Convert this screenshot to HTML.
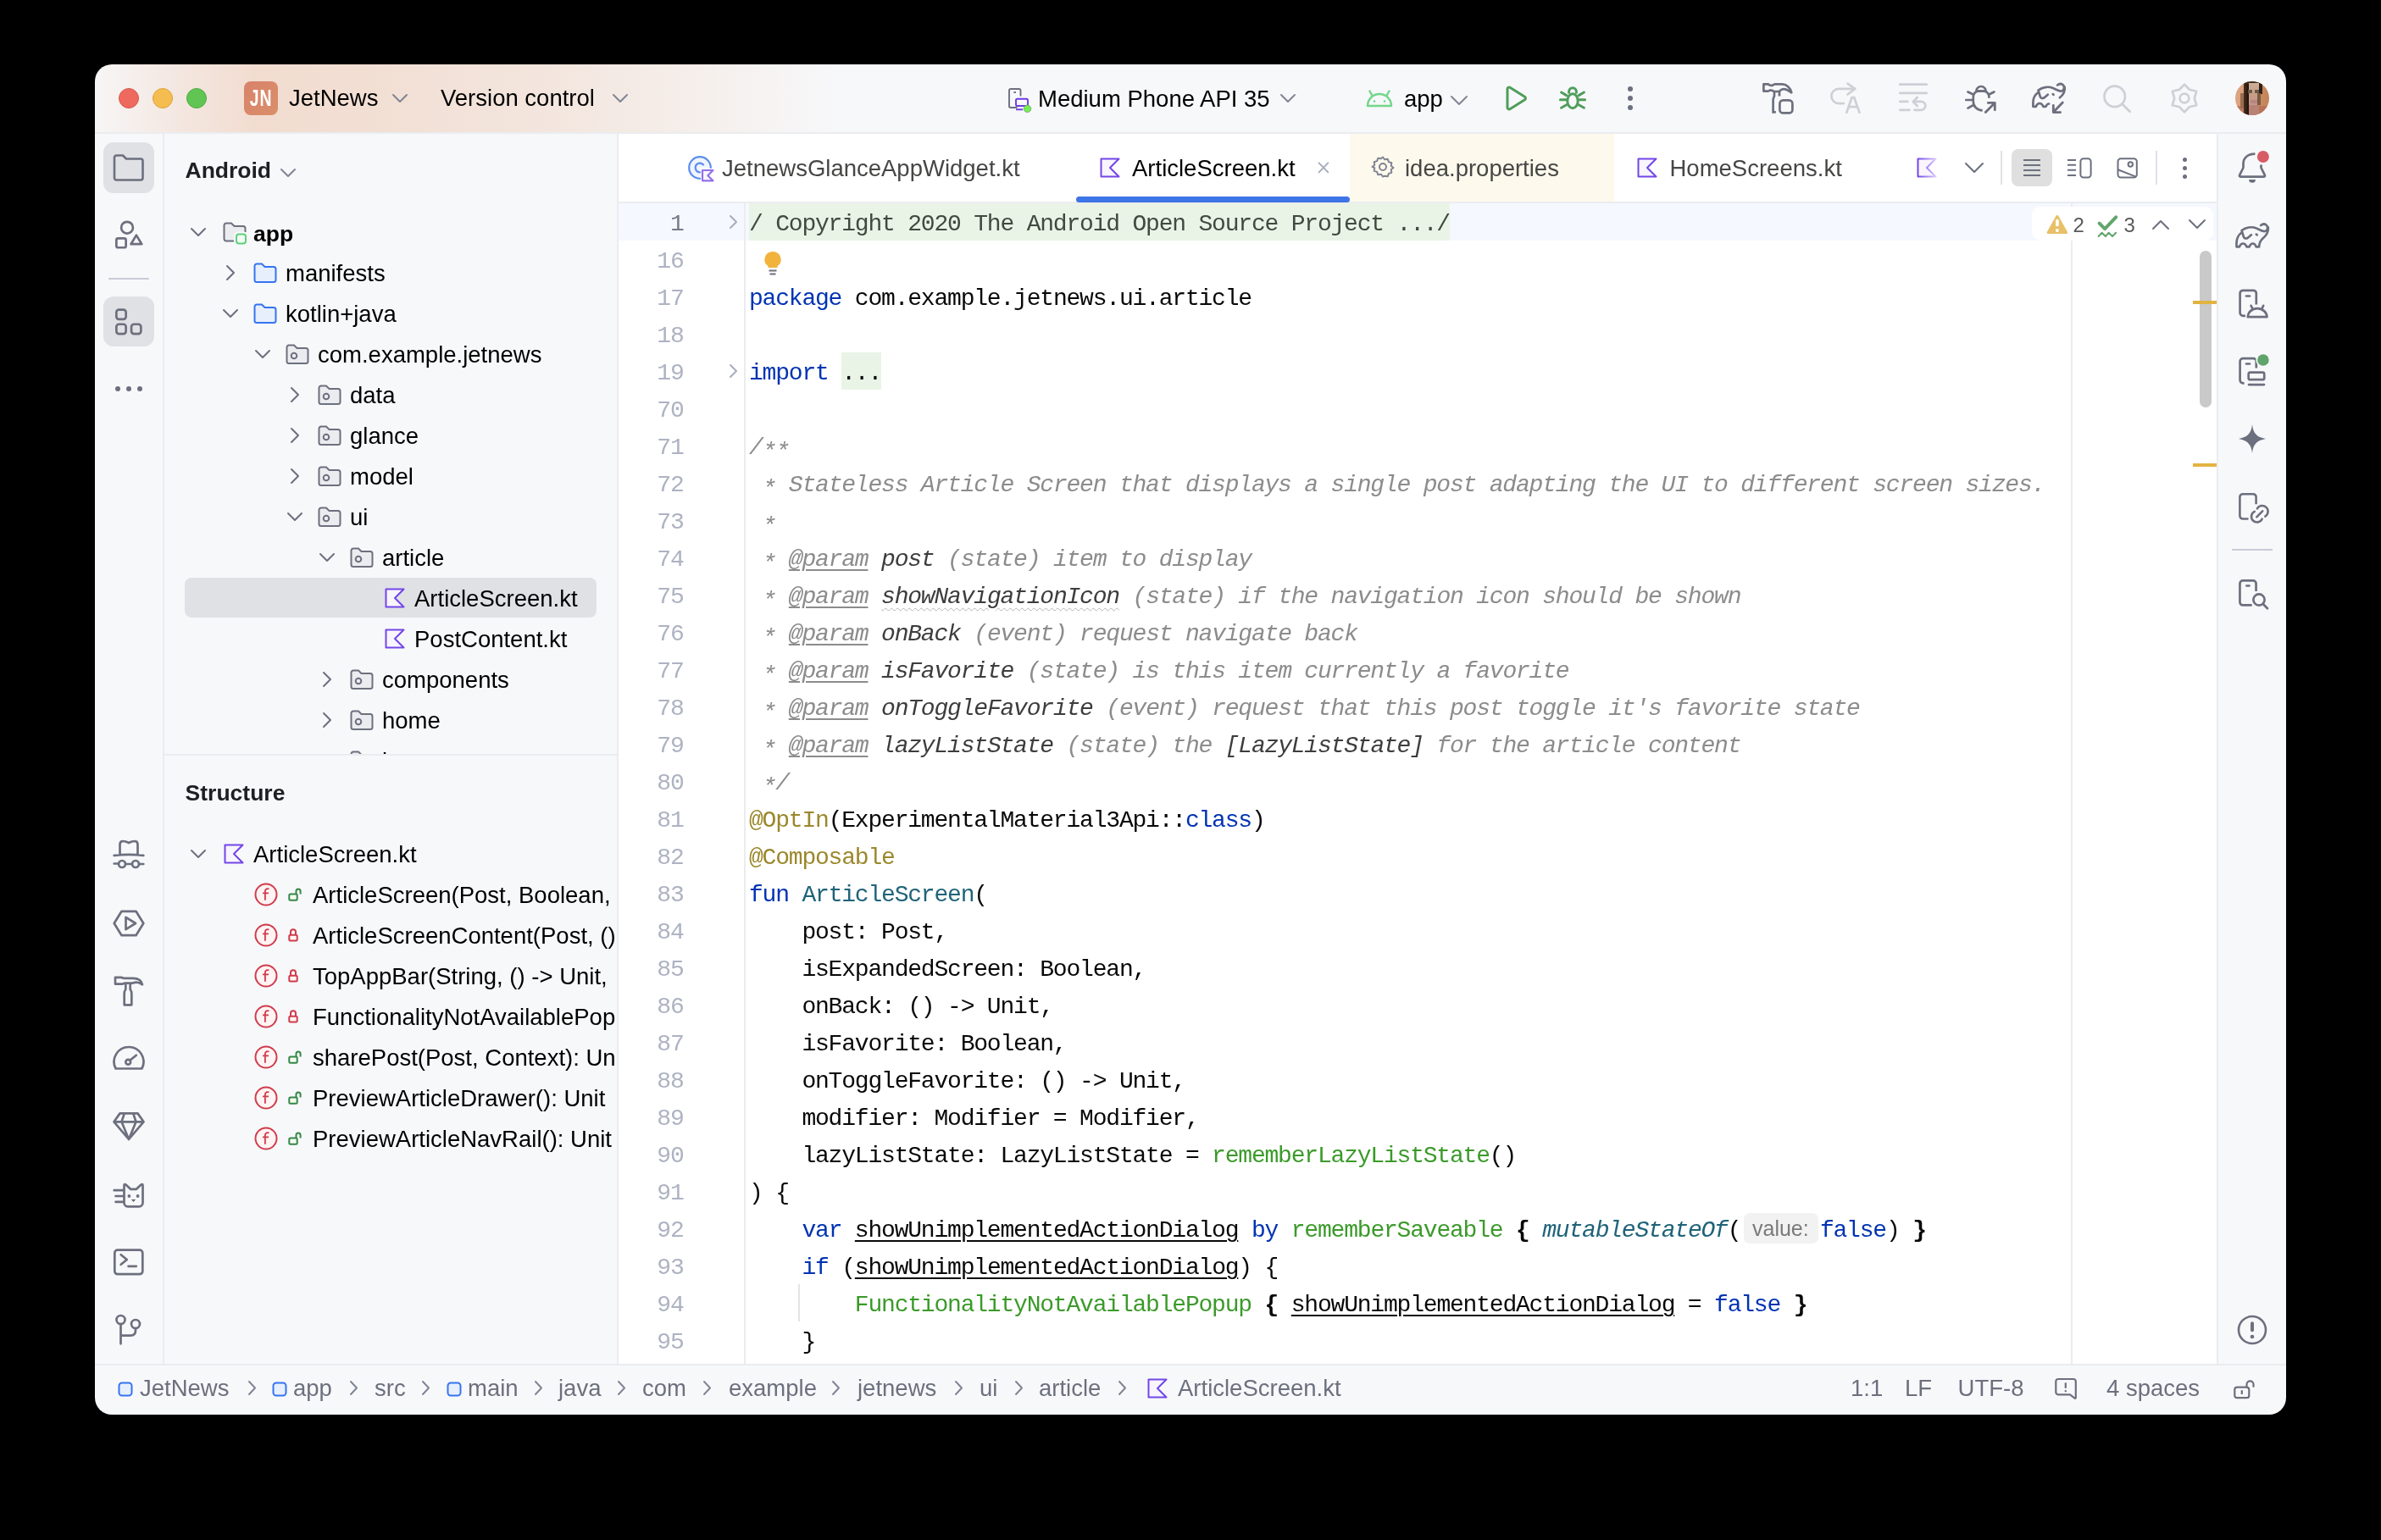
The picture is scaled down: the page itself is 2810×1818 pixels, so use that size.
<!DOCTYPE html><html><head><meta charset="utf-8"><style>
html,body{margin:0;padding:0}
body{width:2810px;height:1818px;background:#000;position:relative;overflow:hidden;font-family:"Liberation Sans",sans-serif}
#win{position:absolute;left:0;top:0;width:2810px;height:1818px;background:#f7f8fa;will-change:transform;clip-path:inset(76px 112px 148px 112px round 20px)}
.t{position:absolute;white-space:pre;line-height:32px}
.r{position:absolute}
.i{position:absolute;overflow:visible}
.code{position:absolute;left:884px;white-space:pre;font-family:"Liberation Mono",monospace;font-size:28px;letter-spacing:-1.2px;line-height:44px;color:#080808}
.ln{position:absolute;white-space:pre;font-family:"Liberation Mono",monospace;font-size:28px;letter-spacing:-1.2px;line-height:44px;color:#aeb3c2;text-align:right;width:120px;left:686.5px}
.kw{color:#0033b3}.an{color:#9b882c}.fd{color:#1f6379}.cp{color:#3b9a2a}.cm{color:#8c8c8c;font-style:italic}
.pn{color:#3d3d3d;font-style:italic}.ul{text-decoration:underline;text-decoration-thickness:2px;text-underline-offset:4px}
.it{font-style:italic}.b{font-weight:bold}
</style></head><body><div id="win">
<div class="r" style="left:112px;top:76px;width:2586px;height:80px;background:linear-gradient(90deg, #f7f6f6 0px, #f4e8e2 90px, #f2dcd0 190px, #f2dfd4 330px, #f3e5dd 520px, #f5eeea 700px, #f7f8fa 880px);"></div>
<div class="r" style="left:112px;top:156px;width:2586px;height:2px;background:#ebecf0;"></div>
<div class="r" style="left:140px;top:104px;width:22px;height:22px;border-radius:50%;background:#ee6a5f;border:1px solid #d8574c"></div>
<div class="r" style="left:180px;top:104px;width:22px;height:22px;border-radius:50%;background:#f5bd4f;border:1px solid #dba23a"></div>
<div class="r" style="left:220px;top:104px;width:22px;height:22px;border-radius:50%;background:#61c554;border:1px solid #4dab41"></div>
<div class="r" style="left:288px;top:96px;width:40px;height:40px;background:linear-gradient(135deg,#d9826a,#d98f6a);border-radius:8px"></div>
<div class="t" style="left:288px;top:100px;width:40px;text-align:center;font-size:27px;font-weight:bold;line-height:32px;color:#fff;transform:scaleX(0.72);letter-spacing:1px">JN</div>
<div class="t" style="left:341px;top:100.0px;font-size:27.5px;color:#000;font-weight:normal;">JetNews</div>
<svg class="i" style="left:462.0px;top:110.0px;" width="20" height="12" viewBox="0 0 20 12" fill="none"><path d="M2 2 L10.0 10 L18 2" stroke="#818594" stroke-width="2" stroke-linecap="round" stroke-linejoin="round"/></svg>
<div class="t" style="left:520px;top:100.0px;font-size:27.5px;color:#000;font-weight:normal;">Version control</div>
<svg class="i" style="left:722.0px;top:110.0px;" width="20" height="12" viewBox="0 0 20 12" fill="none"><path d="M2 2 L10.0 10 L18 2" stroke="#818594" stroke-width="2" stroke-linecap="round" stroke-linejoin="round"/></svg>
<div class="r" style="left:192px;top:158px;width:2px;height:1452px;background:#ebecf0;"></div>
<div class="r" style="left:728px;top:158px;width:2px;height:1452px;background:#ebecf0;"></div>
<div class="r" style="left:730px;top:158px;width:1886px;height:1452px;background:#ffffff;"></div>
<div class="r" style="left:730px;top:238px;width:1886px;height:2px;background:#ebecf0;"></div>
<div class="r" style="left:2616px;top:158px;width:2px;height:1452px;background:#ebecf0;"></div>
<div class="r" style="left:112px;top:1610px;width:2586px;height:2px;background:#ebecf0;"></div>
<div class="t" style="left:218.5px;top:185.0px;font-size:26.5px;color:#1e1f22;font-weight:bold;">Android</div>
<svg class="i" style="left:330.0px;top:198.0px;" width="20" height="12" viewBox="0 0 20 12" fill="none"><path d="M2 2 L10.0 10 L18 2" stroke="#818594" stroke-width="2" stroke-linecap="round" stroke-linejoin="round"/></svg>
<div class="r" style="left:218px;top:682px;width:486px;height:47px;background:#dfe1e5;border-radius:8px"></div>
<div class="r" style="left:194px;top:240px;width:534px;height:650px;overflow:hidden">
<svg class="i" style="left:30px;top:28px;" width="20" height="12" viewBox="0 0 20 12" fill="none"><path d="M2 2 L10 10 L18 2" stroke="#6c707e" stroke-width="2" stroke-linecap="round" stroke-linejoin="round"/></svg>
<svg class="i" style="left:68px;top:21px;" width="32" height="30" viewBox="0 0 32 30" fill="none"><path d="M15 23.5 h-10 a2.5 2.5 0 0 1 -2.5-2.5 v-16 a2.5 2.5 0 0 1 2.5-2.5 h6 l3.5 3.5 h10.5 a2.5 2.5 0 0 1 2.5 2.5 v4.5" fill="#ebecf0" stroke="#6c707e" stroke-width="2"/><rect x="14" y="12.5" width="16" height="16" rx="5" fill="#f7f8fa"/><rect x="17" y="15.5" width="11" height="11" rx="3" fill="#f2fbf4" stroke="#5fd07b" stroke-width="2"/></svg>
<div class="t" style="left:105px;top:19.5px;font-size:26.5px;color:#000;font-weight:bold;">app</div>
<svg class="i" style="left:72px;top:72px;" width="12" height="20" viewBox="0 0 12 20" fill="none"><path d="M2 2 L10 10 L2 18" stroke="#6c707e" stroke-width="2" stroke-linecap="round" stroke-linejoin="round"/></svg>
<svg class="i" style="left:104px;top:69px;" width="30" height="28" viewBox="0 0 30 28" fill="none"><path d="M2.5 5 a2.5 2.5 0 0 1 2.5-2.5 h6 l3.5 3.5 h10.5 a2.5 2.5 0 0 1 2.5 2.5 v13 a2.5 2.5 0 0 1 -2.5 2.5 h-20 a2.5 2.5 0 0 1 -2.5-2.5 z" fill="#e7effd" stroke="#3574f0" stroke-width="2"/></svg>
<div class="t" style="left:143px;top:66.5px;font-size:27.5px;color:#000;font-weight:normal;">manifests</div>
<svg class="i" style="left:68px;top:124px;" width="20" height="12" viewBox="0 0 20 12" fill="none"><path d="M2 2 L10 10 L18 2" stroke="#6c707e" stroke-width="2" stroke-linecap="round" stroke-linejoin="round"/></svg>
<svg class="i" style="left:104px;top:117px;" width="30" height="28" viewBox="0 0 30 28" fill="none"><path d="M2.5 5 a2.5 2.5 0 0 1 2.5-2.5 h6 l3.5 3.5 h10.5 a2.5 2.5 0 0 1 2.5 2.5 v13 a2.5 2.5 0 0 1 -2.5 2.5 h-20 a2.5 2.5 0 0 1 -2.5-2.5 z" fill="#e7effd" stroke="#3574f0" stroke-width="2"/></svg>
<div class="t" style="left:143px;top:114.5px;font-size:27.5px;color:#000;font-weight:normal;">kotlin+java</div>
<svg class="i" style="left:106px;top:172px;" width="20" height="12" viewBox="0 0 20 12" fill="none"><path d="M2 2 L10 10 L18 2" stroke="#6c707e" stroke-width="2" stroke-linecap="round" stroke-linejoin="round"/></svg>
<svg class="i" style="left:142px;top:165px;" width="30" height="28" viewBox="0 0 30 28" fill="none"><path d="M2.5 5 a2.5 2.5 0 0 1 2.5-2.5 h6 l3.5 3.5 h10.5 a2.5 2.5 0 0 1 2.5 2.5 v13 a2.5 2.5 0 0 1 -2.5 2.5 h-20 a2.5 2.5 0 0 1 -2.5-2.5 z" fill="#ebecf0" stroke="#6c707e" stroke-width="2"/><circle cx="11" cy="15" r="3.3" stroke="#6c707e" stroke-width="2"/></svg>
<div class="t" style="left:181px;top:162.5px;font-size:27.5px;color:#000;font-weight:normal;">com.example.jetnews</div>
<svg class="i" style="left:148px;top:216px;" width="12" height="20" viewBox="0 0 12 20" fill="none"><path d="M2 2 L10 10 L2 18" stroke="#6c707e" stroke-width="2" stroke-linecap="round" stroke-linejoin="round"/></svg>
<svg class="i" style="left:180px;top:213px;" width="30" height="28" viewBox="0 0 30 28" fill="none"><path d="M2.5 5 a2.5 2.5 0 0 1 2.5-2.5 h6 l3.5 3.5 h10.5 a2.5 2.5 0 0 1 2.5 2.5 v13 a2.5 2.5 0 0 1 -2.5 2.5 h-20 a2.5 2.5 0 0 1 -2.5-2.5 z" fill="#ebecf0" stroke="#6c707e" stroke-width="2"/><circle cx="11" cy="15" r="3.3" stroke="#6c707e" stroke-width="2"/></svg>
<div class="t" style="left:219px;top:210.5px;font-size:27.5px;color:#000;font-weight:normal;">data</div>
<svg class="i" style="left:148px;top:264px;" width="12" height="20" viewBox="0 0 12 20" fill="none"><path d="M2 2 L10 10 L2 18" stroke="#6c707e" stroke-width="2" stroke-linecap="round" stroke-linejoin="round"/></svg>
<svg class="i" style="left:180px;top:261px;" width="30" height="28" viewBox="0 0 30 28" fill="none"><path d="M2.5 5 a2.5 2.5 0 0 1 2.5-2.5 h6 l3.5 3.5 h10.5 a2.5 2.5 0 0 1 2.5 2.5 v13 a2.5 2.5 0 0 1 -2.5 2.5 h-20 a2.5 2.5 0 0 1 -2.5-2.5 z" fill="#ebecf0" stroke="#6c707e" stroke-width="2"/><circle cx="11" cy="15" r="3.3" stroke="#6c707e" stroke-width="2"/></svg>
<div class="t" style="left:219px;top:258.5px;font-size:27.5px;color:#000;font-weight:normal;">glance</div>
<svg class="i" style="left:148px;top:312px;" width="12" height="20" viewBox="0 0 12 20" fill="none"><path d="M2 2 L10 10 L2 18" stroke="#6c707e" stroke-width="2" stroke-linecap="round" stroke-linejoin="round"/></svg>
<svg class="i" style="left:180px;top:309px;" width="30" height="28" viewBox="0 0 30 28" fill="none"><path d="M2.5 5 a2.5 2.5 0 0 1 2.5-2.5 h6 l3.5 3.5 h10.5 a2.5 2.5 0 0 1 2.5 2.5 v13 a2.5 2.5 0 0 1 -2.5 2.5 h-20 a2.5 2.5 0 0 1 -2.5-2.5 z" fill="#ebecf0" stroke="#6c707e" stroke-width="2"/><circle cx="11" cy="15" r="3.3" stroke="#6c707e" stroke-width="2"/></svg>
<div class="t" style="left:219px;top:306.5px;font-size:27.5px;color:#000;font-weight:normal;">model</div>
<svg class="i" style="left:144px;top:364px;" width="20" height="12" viewBox="0 0 20 12" fill="none"><path d="M2 2 L10 10 L18 2" stroke="#6c707e" stroke-width="2" stroke-linecap="round" stroke-linejoin="round"/></svg>
<svg class="i" style="left:180px;top:357px;" width="30" height="28" viewBox="0 0 30 28" fill="none"><path d="M2.5 5 a2.5 2.5 0 0 1 2.5-2.5 h6 l3.5 3.5 h10.5 a2.5 2.5 0 0 1 2.5 2.5 v13 a2.5 2.5 0 0 1 -2.5 2.5 h-20 a2.5 2.5 0 0 1 -2.5-2.5 z" fill="#ebecf0" stroke="#6c707e" stroke-width="2"/><circle cx="11" cy="15" r="3.3" stroke="#6c707e" stroke-width="2"/></svg>
<div class="t" style="left:219px;top:354.5px;font-size:27.5px;color:#000;font-weight:normal;">ui</div>
<svg class="i" style="left:182px;top:412px;" width="20" height="12" viewBox="0 0 20 12" fill="none"><path d="M2 2 L10 10 L18 2" stroke="#6c707e" stroke-width="2" stroke-linecap="round" stroke-linejoin="round"/></svg>
<svg class="i" style="left:218px;top:405px;" width="30" height="28" viewBox="0 0 30 28" fill="none"><path d="M2.5 5 a2.5 2.5 0 0 1 2.5-2.5 h6 l3.5 3.5 h10.5 a2.5 2.5 0 0 1 2.5 2.5 v13 a2.5 2.5 0 0 1 -2.5 2.5 h-20 a2.5 2.5 0 0 1 -2.5-2.5 z" fill="#ebecf0" stroke="#6c707e" stroke-width="2"/><circle cx="11" cy="15" r="3.3" stroke="#6c707e" stroke-width="2"/></svg>
<div class="t" style="left:257px;top:402.5px;font-size:27.5px;color:#000;font-weight:normal;">article</div>
<svg class="i" style="left:260px;top:454px;" width="24" height="24" viewBox="0 0 24 24" fill="none"><path d="M1.5 1.5 H22.5 L12 12 L22.5 22.5 H1.5 Z" fill="#f8f5ff" stroke="#7346e8" stroke-width="2" stroke-linejoin="round"/></svg>
<div class="t" style="left:295px;top:450.5px;font-size:27.5px;color:#000;font-weight:normal;">ArticleScreen.kt</div>
<svg class="i" style="left:260px;top:502px;" width="24" height="24" viewBox="0 0 24 24" fill="none"><path d="M1.5 1.5 H22.5 L12 12 L22.5 22.5 H1.5 Z" fill="#f8f5ff" stroke="#7346e8" stroke-width="2" stroke-linejoin="round"/></svg>
<div class="t" style="left:295px;top:498.5px;font-size:27.5px;color:#000;font-weight:normal;">PostContent.kt</div>
<svg class="i" style="left:186px;top:552px;" width="12" height="20" viewBox="0 0 12 20" fill="none"><path d="M2 2 L10 10 L2 18" stroke="#6c707e" stroke-width="2" stroke-linecap="round" stroke-linejoin="round"/></svg>
<svg class="i" style="left:218px;top:549px;" width="30" height="28" viewBox="0 0 30 28" fill="none"><path d="M2.5 5 a2.5 2.5 0 0 1 2.5-2.5 h6 l3.5 3.5 h10.5 a2.5 2.5 0 0 1 2.5 2.5 v13 a2.5 2.5 0 0 1 -2.5 2.5 h-20 a2.5 2.5 0 0 1 -2.5-2.5 z" fill="#ebecf0" stroke="#6c707e" stroke-width="2"/><circle cx="11" cy="15" r="3.3" stroke="#6c707e" stroke-width="2"/></svg>
<div class="t" style="left:257px;top:546.5px;font-size:27.5px;color:#000;font-weight:normal;">components</div>
<svg class="i" style="left:186px;top:600px;" width="12" height="20" viewBox="0 0 12 20" fill="none"><path d="M2 2 L10 10 L2 18" stroke="#6c707e" stroke-width="2" stroke-linecap="round" stroke-linejoin="round"/></svg>
<svg class="i" style="left:218px;top:597px;" width="30" height="28" viewBox="0 0 30 28" fill="none"><path d="M2.5 5 a2.5 2.5 0 0 1 2.5-2.5 h6 l3.5 3.5 h10.5 a2.5 2.5 0 0 1 2.5 2.5 v13 a2.5 2.5 0 0 1 -2.5 2.5 h-20 a2.5 2.5 0 0 1 -2.5-2.5 z" fill="#ebecf0" stroke="#6c707e" stroke-width="2"/><circle cx="11" cy="15" r="3.3" stroke="#6c707e" stroke-width="2"/></svg>
<div class="t" style="left:257px;top:594.5px;font-size:27.5px;color:#000;font-weight:normal;">home</div>
<svg class="i" style="left:218px;top:645px;" width="30" height="28" viewBox="0 0 30 28" fill="none"><path d="M2.5 5 a2.5 2.5 0 0 1 2.5-2.5 h6 l3.5 3.5 h10.5 a2.5 2.5 0 0 1 2.5 2.5 v13 a2.5 2.5 0 0 1 -2.5 2.5 h-20 a2.5 2.5 0 0 1 -2.5-2.5 z" fill="#ebecf0" stroke="#6c707e" stroke-width="2"/><circle cx="11" cy="15" r="3.3" stroke="#6c707e" stroke-width="2"/></svg>
<div class="t" style="left:257px;top:642.5px;font-size:27.5px;color:#000;font-weight:normal;">interests</div>
</div>
<div class="r" style="left:194px;top:890px;width:534px;height:2px;background:#ebecf0;"></div>
<div class="t" style="left:218.6px;top:919.5px;font-size:26.5px;color:#1e1f22;font-weight:bold;">Structure</div>
<svg class="i" style="left:224px;top:1002px;" width="20" height="12" viewBox="0 0 20 12" fill="none"><path d="M2 2 L10 10 L18 2" stroke="#6c707e" stroke-width="2" stroke-linecap="round" stroke-linejoin="round"/></svg>
<svg class="i" style="left:264px;top:996px;" width="24" height="24" viewBox="0 0 24 24" fill="none"><path d="M1.5 1.5 H22.5 L12 12 L22.5 22.5 H1.5 Z" fill="#f8f5ff" stroke="#7346e8" stroke-width="2" stroke-linejoin="round"/></svg>
<div class="t" style="left:299px;top:992.5px;font-size:27.5px;color:#000;font-weight:normal;">ArticleScreen.kt</div>
<div class="r" style="left:194px;top:1030px;width:534px;height:400px;overflow:hidden">
<svg class="i" style="left:105px;top:11px;" width="30" height="30" viewBox="0 0 30 30" fill="none"><circle cx="15" cy="15" r="12.5" fill="#fff3f3" stroke="#d03b4b" stroke-width="2"/><path d="M18.5 8.6 a3 3 0 0 0 -4.6 2.2 V21.8 M11 13.4 H18" stroke="#d03b4b" stroke-width="1.8"/></svg>
<svg class="i" style="left:143px;top:15px;" width="22" height="22" viewBox="0 0 22 22" fill="none"><rect x="4.3" y="10.4" width="9.4" height="7.4" rx="1.5" fill="#f2fbf2" stroke="#368746" stroke-width="2"/><path d="M12.5 10.4 V7 A2.55 2.55 0 0 1 17.6 7 V10.6" stroke="#368746" stroke-width="2"/></svg>
<div class="t" style="left:175px;top:10.5px;font-size:27.5px;color:#000;font-weight:normal;">ArticleScreen(Post, Boolean, () -&gt; Unit, Boolean, () -&gt; Unit</div>
<svg class="i" style="left:105px;top:59px;" width="30" height="30" viewBox="0 0 30 30" fill="none"><circle cx="15" cy="15" r="12.5" fill="#fff3f3" stroke="#d03b4b" stroke-width="2"/><path d="M18.5 8.6 a3 3 0 0 0 -4.6 2.2 V21.8 M11 13.4 H18" stroke="#d03b4b" stroke-width="1.8"/></svg>
<svg class="i" style="left:143px;top:63px;" width="22" height="22" viewBox="0 0 22 22" fill="none"><rect x="4.3" y="10.7" width="9.4" height="6.8" rx="1.5" fill="#fff5f5" stroke="#d03b4b" stroke-width="2"/><path d="M6 10.7 V7.2 A3 3 0 0 1 12 7.2 V10.7" stroke="#d03b4b" stroke-width="2"/></svg>
<div class="t" style="left:175px;top:58.5px;font-size:27.5px;color:#000;font-weight:normal;">ArticleScreenContent(Post, () -&gt; Unit</div>
<svg class="i" style="left:105px;top:107px;" width="30" height="30" viewBox="0 0 30 30" fill="none"><circle cx="15" cy="15" r="12.5" fill="#fff3f3" stroke="#d03b4b" stroke-width="2"/><path d="M18.5 8.6 a3 3 0 0 0 -4.6 2.2 V21.8 M11 13.4 H18" stroke="#d03b4b" stroke-width="1.8"/></svg>
<svg class="i" style="left:143px;top:111px;" width="22" height="22" viewBox="0 0 22 22" fill="none"><rect x="4.3" y="10.7" width="9.4" height="6.8" rx="1.5" fill="#fff5f5" stroke="#d03b4b" stroke-width="2"/><path d="M6 10.7 V7.2 A3 3 0 0 1 12 7.2 V10.7" stroke="#d03b4b" stroke-width="2"/></svg>
<div class="t" style="left:175px;top:106.5px;font-size:27.5px;color:#000;font-weight:normal;">TopAppBar(String, () -&gt; Unit,</div>
<svg class="i" style="left:105px;top:155px;" width="30" height="30" viewBox="0 0 30 30" fill="none"><circle cx="15" cy="15" r="12.5" fill="#fff3f3" stroke="#d03b4b" stroke-width="2"/><path d="M18.5 8.6 a3 3 0 0 0 -4.6 2.2 V21.8 M11 13.4 H18" stroke="#d03b4b" stroke-width="1.8"/></svg>
<svg class="i" style="left:143px;top:159px;" width="22" height="22" viewBox="0 0 22 22" fill="none"><rect x="4.3" y="10.7" width="9.4" height="6.8" rx="1.5" fill="#fff5f5" stroke="#d03b4b" stroke-width="2"/><path d="M6 10.7 V7.2 A3 3 0 0 1 12 7.2 V10.7" stroke="#d03b4b" stroke-width="2"/></svg>
<div class="t" style="left:175px;top:154.5px;font-size:27.5px;color:#000;font-weight:normal;">FunctionalityNotAvailablePopup(() -&gt; Unit)</div>
<svg class="i" style="left:105px;top:203px;" width="30" height="30" viewBox="0 0 30 30" fill="none"><circle cx="15" cy="15" r="12.5" fill="#fff3f3" stroke="#d03b4b" stroke-width="2"/><path d="M18.5 8.6 a3 3 0 0 0 -4.6 2.2 V21.8 M11 13.4 H18" stroke="#d03b4b" stroke-width="1.8"/></svg>
<svg class="i" style="left:143px;top:207px;" width="22" height="22" viewBox="0 0 22 22" fill="none"><rect x="4.3" y="10.4" width="9.4" height="7.4" rx="1.5" fill="#f2fbf2" stroke="#368746" stroke-width="2"/><path d="M12.5 10.4 V7 A2.55 2.55 0 0 1 17.6 7 V10.6" stroke="#368746" stroke-width="2"/></svg>
<div class="t" style="left:175px;top:202.5px;font-size:27.5px;color:#000;font-weight:normal;">sharePost(Post, Context): Unit</div>
<svg class="i" style="left:105px;top:251px;" width="30" height="30" viewBox="0 0 30 30" fill="none"><circle cx="15" cy="15" r="12.5" fill="#fff3f3" stroke="#d03b4b" stroke-width="2"/><path d="M18.5 8.6 a3 3 0 0 0 -4.6 2.2 V21.8 M11 13.4 H18" stroke="#d03b4b" stroke-width="1.8"/></svg>
<svg class="i" style="left:143px;top:255px;" width="22" height="22" viewBox="0 0 22 22" fill="none"><rect x="4.3" y="10.4" width="9.4" height="7.4" rx="1.5" fill="#f2fbf2" stroke="#368746" stroke-width="2"/><path d="M12.5 10.4 V7 A2.55 2.55 0 0 1 17.6 7 V10.6" stroke="#368746" stroke-width="2"/></svg>
<div class="t" style="left:175px;top:250.5px;font-size:27.5px;color:#000;font-weight:normal;">PreviewArticleDrawer(): Unit</div>
<svg class="i" style="left:105px;top:299px;" width="30" height="30" viewBox="0 0 30 30" fill="none"><circle cx="15" cy="15" r="12.5" fill="#fff3f3" stroke="#d03b4b" stroke-width="2"/><path d="M18.5 8.6 a3 3 0 0 0 -4.6 2.2 V21.8 M11 13.4 H18" stroke="#d03b4b" stroke-width="1.8"/></svg>
<svg class="i" style="left:143px;top:303px;" width="22" height="22" viewBox="0 0 22 22" fill="none"><rect x="4.3" y="10.4" width="9.4" height="7.4" rx="1.5" fill="#f2fbf2" stroke="#368746" stroke-width="2"/><path d="M12.5 10.4 V7 A2.55 2.55 0 0 1 17.6 7 V10.6" stroke="#368746" stroke-width="2"/></svg>
<div class="t" style="left:175px;top:298.5px;font-size:27.5px;color:#000;font-weight:normal;">PreviewArticleNavRail(): Unit</div>
</div>
<svg class="i" style="left:811px;top:181px;" width="34" height="34" viewBox="0 0 34 34" fill="none"><path d="M15 17 L15 29.8 A12.8 12.8 0 1 1 27.8 17 Z" fill="#f0f4fd"/><path d="M15 29.8 A12.8 12.8 0 1 1 27.8 17 M15 22.4 A5.4 5.4 0 1 1 19.1 13.5" stroke="#5b8def" stroke-width="2.2" stroke-linecap="round"/><path d="M18 20 H30.5 L24.3 26.2 L30.5 32.3 H18 Z" fill="#faf8ff" stroke="#9370e8" stroke-width="2.2" stroke-linejoin="round"/></svg>
<div class="t" style="left:852px;top:182.5px;font-size:27.5px;color:#464645;font-weight:normal;">JetnewsGlanceAppWidget.kt</div>
<svg class="i" style="left:1298px;top:186px;" width="24" height="24" viewBox="0 0 24 24" fill="none"><path d="M1.5 1.5 H22.5 L12 12 L22.5 22.5 H1.5 Z" fill="#f8f5ff" stroke="#7346e8" stroke-width="2" stroke-linejoin="round"/></svg>
<div class="t" style="left:1336px;top:182.5px;font-size:27.5px;color:#000;font-weight:normal;">ArticleScreen.kt</div>
<svg class="i" style="left:1552px;top:186px;" width="20" height="20" viewBox="0 0 20 20" fill="none"><path d="M4.6 6.4 L15.3 17.4 M15.3 6.4 L4.6 17.4" stroke="#a8adbd" stroke-width="2" stroke-linecap="round"/></svg>
<div class="r" style="left:1270px;top:232px;width:323px;height:7px;background:#3d74e6;border-radius:4px"></div>
<div class="r" style="left:1593px;top:158px;width:312px;height:80px;background:#fdf9ec;"></div>
<svg class="i" style="left:1618px;top:183px;" width="28" height="28" viewBox="0 0 28 28" fill="none"><path d="M14 2.5 l2.2 2.8 3.5-.6 1.2 3.4 3.4 1.2-.6 3.5 2.8 2.2-2.8 2.2.6 3.5-3.4 1.2-1.2 3.4-3.5-.6L14 25.5l-2.2-2.8-3.5.6-1.2-3.4-3.4-1.2.6-3.5L1.5 14l2.8-2.2-.6-3.5 3.4-1.2 1.2-3.4 3.5.6z" stroke="#818594" stroke-width="2" stroke-linejoin="round"/><circle cx="14" cy="14" r="4" stroke="#818594" stroke-width="2"/></svg>
<div class="t" style="left:1658px;top:182.5px;font-size:27.5px;color:#464645;font-weight:normal;">idea.properties</div>
<svg class="i" style="left:1932px;top:186px;" width="24" height="24" viewBox="0 0 24 24" fill="none"><path d="M1.5 1.5 H22.5 L12 12 L22.5 22.5 H1.5 Z" fill="#f8f5ff" stroke="#7346e8" stroke-width="2" stroke-linejoin="round"/></svg>
<div class="t" style="left:1970.5px;top:182.5px;font-size:27.5px;color:#464645;font-weight:normal;">HomeScreens.kt</div>
<svg class="i" style="left:2262px;top:186px;" width="24" height="24" viewBox="0 0 24 24" fill="none"><defs><linearGradient id="kf" x1="0" x2="1"><stop offset="0" stop-color="#7346e8"/><stop offset="1" stop-color="#7346e8" stop-opacity="0.25"/></linearGradient></defs><path d="M1.5 1.5 H22.5 L12 12 L22.5 22.5 H1.5 Z" fill="#f8f5ff" stroke="url(#kf)" stroke-width="2" stroke-linejoin="round"/></svg>
<svg class="i" style="left:2318px;top:190px;" width="24" height="16" viewBox="0 0 24 16" fill="none"><path d="M2 3 L12 13 L22 3" stroke="#6c707e" stroke-width="2" stroke-linecap="round" stroke-linejoin="round"/></svg>
<div class="r" style="left:2361px;top:178px;width:2px;height:40px;background:#dfe1e5;"></div>
<div class="r" style="left:2374px;top:176px;width:48px;height:44px;background:#dfdfdf;border-radius:8px"></div>
<svg class="i" style="left:2386px;top:186px;" width="24" height="24" viewBox="0 0 24 24" fill="none"><path d="M2 3 H22 M2 9 H22 M2 15 H22 M2 21 H22" stroke="#6c707e" stroke-width="2"/></svg>
<svg class="i" style="left:2438px;top:184px;" width="32" height="28" viewBox="0 0 32 28" fill="none"><path d="M2 4.9 H12 M2 10.8 H12 M2 16.7 H12 M2 22.9 H12" stroke="#6c707e" stroke-width="2"/><rect x="17.4" y="3.3" width="12.2" height="22.2" rx="3.5" stroke="#6c707e" stroke-width="2"/></svg>
<svg class="i" style="left:2496px;top:184px;" width="28" height="28" viewBox="0 0 28 28" fill="none"><rect x="3.5" y="3.3" width="22.3" height="22.2" rx="3.5" stroke="#6c707e" stroke-width="2"/><path d="M3.5 16.2 L24.8 24.6" stroke="#6c707e" stroke-width="2"/><circle cx="18.3" cy="10" r="2.7" stroke="#6c707e" stroke-width="2"/></svg>
<div class="r" style="left:2544px;top:178px;width:2px;height:40px;background:#dfe1e5;"></div>
<div class="r" style="left:2575.5px;top:185.5px;width:5px;height:5px;border-radius:50%;background:#6c707e"></div>
<div class="r" style="left:2575.5px;top:195.5px;width:5px;height:5px;border-radius:50%;background:#6c707e"></div>
<div class="r" style="left:2575.5px;top:205.5px;width:5px;height:5px;border-radius:50%;background:#6c707e"></div>
<div class="r" style="left:730px;top:240px;width:1886px;height:44px;background:#f5f8fe;"></div>
<div class="r" style="left:878px;top:240px;width:2px;height:1370px;background:#ebecf0;"></div>
<div class="r" style="left:2444px;top:240px;width:2px;height:1370px;background:#ebecf0;"></div>
<div class="ln" style="top:243px;color:#767a8a">1</div>
<div class="ln" style="top:287px;color:#aeb3c2">16</div>
<div class="ln" style="top:331px;color:#aeb3c2">17</div>
<div class="ln" style="top:375px;color:#aeb3c2">18</div>
<div class="ln" style="top:419px;color:#aeb3c2">19</div>
<div class="ln" style="top:463px;color:#aeb3c2">70</div>
<div class="ln" style="top:507px;color:#aeb3c2">71</div>
<div class="ln" style="top:551px;color:#aeb3c2">72</div>
<div class="ln" style="top:595px;color:#aeb3c2">73</div>
<div class="ln" style="top:639px;color:#aeb3c2">74</div>
<div class="ln" style="top:683px;color:#aeb3c2">75</div>
<div class="ln" style="top:727px;color:#aeb3c2">76</div>
<div class="ln" style="top:771px;color:#aeb3c2">77</div>
<div class="ln" style="top:815px;color:#aeb3c2">78</div>
<div class="ln" style="top:859px;color:#aeb3c2">79</div>
<div class="ln" style="top:903px;color:#aeb3c2">80</div>
<div class="ln" style="top:947px;color:#aeb3c2">81</div>
<div class="ln" style="top:991px;color:#aeb3c2">82</div>
<div class="ln" style="top:1035px;color:#aeb3c2">83</div>
<div class="ln" style="top:1079px;color:#aeb3c2">84</div>
<div class="ln" style="top:1123px;color:#aeb3c2">85</div>
<div class="ln" style="top:1167px;color:#aeb3c2">86</div>
<div class="ln" style="top:1211px;color:#aeb3c2">87</div>
<div class="ln" style="top:1255px;color:#aeb3c2">88</div>
<div class="ln" style="top:1299px;color:#aeb3c2">89</div>
<div class="ln" style="top:1343px;color:#aeb3c2">90</div>
<div class="ln" style="top:1387px;color:#aeb3c2">91</div>
<div class="ln" style="top:1431px;color:#aeb3c2">92</div>
<div class="ln" style="top:1475px;color:#aeb3c2">93</div>
<div class="ln" style="top:1519px;color:#aeb3c2">94</div>
<div class="ln" style="top:1563px;color:#aeb3c2">95</div>
<svg class="i" style="left:859px;top:252px;" width="14" height="20" viewBox="0 0 14 20" fill="none"><path d="M3 3 L10 10 L3 17" stroke="#a8adbd" stroke-width="2" stroke-linecap="round" stroke-linejoin="round"/></svg>
<svg class="i" style="left:859px;top:428px;" width="14" height="20" viewBox="0 0 14 20" fill="none"><path d="M3 3 L10 10 L3 17" stroke="#a8adbd" stroke-width="2" stroke-linecap="round" stroke-linejoin="round"/></svg>
<div class="r" style="left:884px;top:240px;width:827px;height:44px;background:#e9f4e6;"></div>
<div class="r" style="left:993px;top:416px;width:47px;height:44px;background:#e9f4e6;"></div>
<svg class="i" style="left:900px;top:295px;" width="24" height="32" viewBox="0 0 24 32" fill="none"><path d="M12 2 a9.5 9.5 0 0 1 5.5 17.3 V21 H6.5 V19.3 A9.5 9.5 0 0 1 12 2 z" fill="#f2b33d"/><path d="M7.5 24.5 H16.5 M8.5 28.5 H15.5" stroke="#6c707e" stroke-width="2"/></svg>
<div class="r" style="left:942px;top:1516px;width:2px;height:44px;background:#e4e4e4;"></div>
<div class="code" style="top:243px"><span style="color:#3f4a41">/ Copyright 2020 The Android Open Source Project .../</span></div>
<div class="code" style="top:331px"><span class="kw">package</span> com.example.jetnews.ui.article</div>
<div class="code" style="top:419px"><span class="kw">import</span> ...</div>
<div class="code" style="top:507px"><span class="cm">/<span style="position:relative;top:5px">*</span><span style="position:relative;top:5px">*</span></span></div>
<div class="code" style="top:551px"><span class="cm"> <span style="position:relative;top:5px">*</span></span><span class="cm"> Stateless Article Screen that displays a single post adapting the UI to different screen sizes.</span></div>
<div class="code" style="top:595px"><span class="cm"> <span style="position:relative;top:5px">*</span></span></div>
<div class="code" style="top:639px"><span class="cm"> <span style="position:relative;top:5px">*</span> </span><span class="cm ul" style="text-decoration-thickness:1.5px">@param</span><span class="cm"> </span><span class="pn">post</span><span class="cm"> (state) item to display</span></div>
<div class="code" style="top:683px"><span class="cm"> <span style="position:relative;top:5px">*</span> </span><span class="cm ul" style="text-decoration-thickness:1.5px">@param</span><span class="cm"> </span><span class="pn" style="text-decoration:underline wavy #b4b4b4;text-decoration-thickness:1px;text-underline-offset:5px">showNavigationIcon</span><span class="cm"> (state) if the navigation icon should be shown</span></div>
<div class="code" style="top:727px"><span class="cm"> <span style="position:relative;top:5px">*</span> </span><span class="cm ul" style="text-decoration-thickness:1.5px">@param</span><span class="cm"> </span><span class="pn">onBack</span><span class="cm"> (event) request navigate back</span></div>
<div class="code" style="top:771px"><span class="cm"> <span style="position:relative;top:5px">*</span> </span><span class="cm ul" style="text-decoration-thickness:1.5px">@param</span><span class="cm"> </span><span class="pn">isFavorite</span><span class="cm"> (state) is this item currently a favorite</span></div>
<div class="code" style="top:815px"><span class="cm"> <span style="position:relative;top:5px">*</span> </span><span class="cm ul" style="text-decoration-thickness:1.5px">@param</span><span class="cm"> </span><span class="pn">onToggleFavorite</span><span class="cm"> (event) request that this post toggle it&#x27;s favorite state</span></div>
<div class="code" style="top:859px"><span class="cm"> <span style="position:relative;top:5px">*</span> </span><span class="cm ul" style="text-decoration-thickness:1.5px">@param</span><span class="cm"> </span><span class="pn">lazyListState</span><span class="cm"> (state) the </span><span class="pn">[LazyListState]</span><span class="cm"> for the article content</span></div>
<div class="code" style="top:903px"><span class="cm"> <span style="position:relative;top:5px">*</span>/</span></div>
<div class="code" style="top:947px"><span class="an">@OptIn</span>(ExperimentalMaterial3Api::<span class="kw">class</span>)</div>
<div class="code" style="top:991px"><span class="an">@Composable</span></div>
<div class="code" style="top:1035px"><span class="kw">fun</span> <span class="fd">ArticleScreen</span>(</div>
<div class="code" style="top:1079px">    post: Post,</div>
<div class="code" style="top:1123px">    isExpandedScreen: Boolean,</div>
<div class="code" style="top:1167px">    onBack: () -&gt; Unit,</div>
<div class="code" style="top:1211px">    isFavorite: Boolean,</div>
<div class="code" style="top:1255px">    onToggleFavorite: () -&gt; Unit,</div>
<div class="code" style="top:1299px">    modifier: Modifier = Modifier,</div>
<div class="code" style="top:1343px">    lazyListState: LazyListState = <span class="cp">rememberLazyListState</span>()</div>
<div class="code" style="top:1387px">) {</div>
<div class="code" style="top:1431px">    <span class="kw">var</span> <span class="ul">showUnimplementedActionDialog</span> <span class="kw">by</span> <span class="cp">rememberSaveable</span> <span class="b">{</span> <span class="fd it">mutableStateOf</span>(<span style="display:inline-block;width:93.6px"></span><span class="kw">false</span>) <span class="b">}</span></div>
<div class="code" style="top:1475px">    <span class="kw">if</span> (<span class="ul">showUnimplementedActionDialog</span>) {</div>
<div class="code" style="top:1519px">        <span class="cp">FunctionalityNotAvailablePopup</span> <span class="b">{</span> <span class="ul">showUnimplementedActionDialog</span> = <span class="kw">false</span> <span class="b">}</span></div>
<div class="code" style="top:1563px">    }</div>
<div class="r" style="left:2058px;top:1432px;width:88px;height:36px;background:#f2f2f2;border-radius:7px"></div>
<div class="t" style="left:2068px;top:1434.3px;font-size:25px;color:#7a7a7a;font-weight:normal;">value:</div>
<div class="r" style="left:2398px;top:244px;width:214px;height:40px;background:#ffffff;border-radius:10px"></div>
<svg class="i" style="left:2414px;top:252px;" width="28" height="26" viewBox="0 0 28 26" fill="none"><path d="M13.9 3.6 L24.5 22.5 H3.3 Z" fill="#e8c067" stroke="#e8c067" stroke-width="3.2" stroke-linejoin="round"/><path d="M13.9 8.6 V13.4" stroke="#fff" stroke-width="3.8" stroke-linecap="round"/><circle cx="13.9" cy="19.9" r="2" fill="#fff"/></svg>
<div class="t" style="left:2446.5px;top:249.9px;font-size:24px;color:#5a5a5a;font-weight:normal;">2</div>
<svg class="i" style="left:2474px;top:252px;" width="26" height="30" viewBox="0 0 26 30" fill="none"><path d="M3.6 11.6 L10.1 18.2 L23.2 4.3" stroke="#62a66b" stroke-width="4" stroke-linecap="round" stroke-linejoin="round"/><path d="M2.6 27 L6.6 22.7 L10.9 27 L14.7 22.7 L19 27 L23.2 22.7" stroke="#62a66b" stroke-width="2" stroke-linecap="round" stroke-linejoin="round"/></svg>
<div class="t" style="left:2506.5px;top:249.9px;font-size:24px;color:#5a5a5a;font-weight:normal;">3</div>
<svg class="i" style="left:2539px;top:258px;" width="22" height="14" viewBox="0 0 22 14" fill="none"><path d="M2 12 L11 3 L20 12" stroke="#6c707e" stroke-width="2" stroke-linecap="round" stroke-linejoin="round"/></svg>
<svg class="i" style="left:2582px;top:258px;" width="22" height="14" viewBox="0 0 22 14" fill="none"><path d="M2 2 L11 11 L20 2" stroke="#6c707e" stroke-width="2" stroke-linecap="round" stroke-linejoin="round"/></svg>
<div class="r" style="left:2596px;top:296px;width:14px;height:185px;background:#c9c9c9;border-radius:7px"></div>
<div class="r" style="left:2588px;top:355px;width:28px;height:4px;background:#e3b341;"></div>
<div class="r" style="left:2588px;top:547px;width:28px;height:4px;background:#e3b341;"></div>
<svg class="i" style="left:1188px;top:102px;" width="32" height="32" viewBox="0 0 32 32" fill="none"><path d="M12.5 25 H4.7 a1.7 1.7 0 0 1 -1.7-1.7 V4.7 A1.7 1.7 0 0 1 4.7 3 H14.8 A1.7 1.7 0 0 1 16.5 4.7 V11.5" stroke="#6c707e" stroke-width="1.9"/><path d="M8.3 7 H11" stroke="#6c707e" stroke-width="1.9"/><rect x="11" y="14.8" width="14" height="8.2" rx="1.6" stroke="#6f3be6" stroke-width="1.9"/><path d="M11 27.3 H19" stroke="#6f3be6" stroke-width="1.9"/><circle cx="24.5" cy="26.3" r="4.3" fill="#72f04e" stroke="#7a8a7a" stroke-width="0.7"/></svg>
<div class="t" style="left:1225px;top:100.8px;font-size:27.5px;color:#000;font-weight:normal;">Medium Phone API 35</div>
<svg class="i" style="left:1510.0px;top:110.0px;" width="20" height="12" viewBox="0 0 20 12" fill="none"><path d="M2 2 L10.0 10 L18 2" stroke="#818594" stroke-width="2" stroke-linecap="round" stroke-linejoin="round"/></svg>
<svg class="i" style="left:1611px;top:104px;" width="34" height="24" viewBox="0 0 34 24" fill="none"><path d="M3 21 A14 14 0 0 1 31 21 Z" stroke="#72d68a" stroke-width="2.4" stroke-linejoin="round"/><path d="M8.5 9 L5.5 3.5 M25.5 9 L28.5 3.5" stroke="#72d68a" stroke-width="2.4" stroke-linecap="round"/><circle cx="11" cy="15.5" r="1.3" fill="#72d68a"/><circle cx="23" cy="15.5" r="1.3" fill="#72d68a"/></svg>
<div class="t" style="left:1657px;top:100.8px;font-size:27.5px;color:#000;font-weight:normal;">app</div>
<svg class="i" style="left:1711.0px;top:111.5px;" width="22" height="13" viewBox="0 0 22 13" fill="none"><path d="M2 2 L11.0 11 L20 2" stroke="#818594" stroke-width="2" stroke-linecap="round" stroke-linejoin="round"/></svg>
<svg class="i" style="left:1774px;top:100px;" width="30" height="32" viewBox="0 0 30 32" fill="none"><path d="M5 5 a2 2 0 0 1 3-1.7 L25.5 14.3 a2 2 0 0 1 0 3.4 L8 28.7 a2 2 0 0 1 -3-1.7 Z" stroke="#4f9d5a" stroke-width="3" stroke-linejoin="round"/></svg>
<svg class="i" style="left:1838px;top:99px;" width="36" height="34" viewBox="0 0 36 34" fill="none"><path d="M13.6 11.5 V9.2 A4.4 4.4 0 0 1 22.4 9.2 V11.5" stroke="#4f9d5a" stroke-width="3"/><ellipse cx="18" cy="20.2" rx="6.2" ry="8.5" stroke="#4f9d5a" stroke-width="3"/><path d="M4.6 10 L10.8 13.6 M3.4 18.7 H10.8 M4.6 28.2 L10.8 24.8 M31.4 10 L25.2 13.6 M32.6 18.7 H25.2 M31.4 28.2 L25.2 24.8" stroke="#4f9d5a" stroke-width="3" stroke-linecap="round"/></svg>
<div class="r" style="left:1921px;top:102px;width:6px;height:6px;border-radius:50%;background:#6c707e"></div>
<div class="r" style="left:1921px;top:113px;width:6px;height:6px;border-radius:50%;background:#6c707e"></div>
<div class="r" style="left:1921px;top:124px;width:6px;height:6px;border-radius:50%;background:#6c707e"></div>
<svg class="i" style="left:2076px;top:94px;" width="44" height="44" viewBox="0 0 44 44" fill="none"><path d="M5.4 5.4 H11 Q12.5 6.8 14 6.8 H16 Q17.5 5.4 19 5.4 H27 C32.5 5.4 37 9.5 38.3 15.3 C35 13 32 11.2 29 11.2 C27 11.2 25.5 12.3 23.5 14 H17.5 Q16 12.6 14.5 12.6 H12.5 Q11.5 13.6 10.5 13.6 H5.4 Z" stroke="#6c707e" stroke-width="2.7" stroke-linejoin="round"/><path d="M18 14 V19.5 Q16.6 21.5 16.6 24 V38.4 H19.8 M24 14 V19.5" stroke="#6c707e" stroke-width="2.7"/><rect x="24.4" y="24.4" width="15" height="15" rx="4" stroke="#6c707e" stroke-width="2.7"/></svg>
<svg class="i" style="left:2156px;top:94px;" width="44" height="44" viewBox="0 0 44 44" fill="none"><path d="M19.9 28.1 H14 A8.6 8.6 0 0 1 14 10.9 H33 M24.5 4.6 L33.3 10.9 L24.5 17.5" stroke="#ced0d6" stroke-width="2.7" stroke-linecap="round" stroke-linejoin="round"/><path d="M23 39.8 L29.5 21.2 H32.3 L38.8 39.8 M25.6 32.2 H36.2" stroke="#ced0d6" stroke-width="2.7"/></svg>
<svg class="i" style="left:2236px;top:94px;" width="44" height="44" viewBox="0 0 44 44" fill="none"><path d="M6.3 5.7 H37.7 M6.3 15.8 H37.7 M6.3 25.9 H15.3 M6.3 35.8 H17.5 M23.5 35.8 H32 A5 5 0 0 0 32 25.9 H22 M26.7 20.9 L21.8 25.9 L26.7 30.9" stroke="#ced0d6" stroke-width="2.8" stroke-linecap="round" stroke-linejoin="round"/></svg>
<svg class="i" style="left:2316px;top:94px;" width="44" height="44" viewBox="0 0 44 44" fill="none"><path d="M16.4 13.6 A5.6 5.6 0 0 1 27.6 13.6 Z" stroke="#6c707e" stroke-width="2.7" stroke-linejoin="round"/><path d="M31.4 21.8 V20 C31.4 16.5 28.5 13.6 25 13.6 H19.2 C15.7 13.6 12.8 16.5 12.8 20 V26 C12.8 31.8 17.5 36.3 23.7 36.3" stroke="#6c707e" stroke-width="2.7"/><path d="M6.5 14.5 L12.2 17.2 M4.3 24 H12 M6.5 33.6 L12.2 30.5 M37.4 14.5 L31.4 17.5" stroke="#6c707e" stroke-width="2.7" stroke-linecap="round"/><path d="M27.3 38.6 L38.2 27.6 M30.3 27.4 H38.3 V35.8" stroke="#6c707e" stroke-width="2.8" stroke-linecap="round" stroke-linejoin="round"/></svg>
<svg class="i" style="left:2392px;top:94px;" width="56" height="56" viewBox="0 0 56 56" fill="none"><g transform="translate(-2.1,-9.5)"><path d="M15.6 22 C20 19 27 17 33 19.5 C37 21 40 23.5 43 23 C46.5 22.5 47 17.5 44.5 15.5 C42.5 14 40 14.5 38.2 16 M15.6 22 L17.9 29.6 C18.5 31.5 20.5 32 22.5 31 L26.9 27.3 M32.8 26.6 L33.6 27.3 M9.5 41.3 V37 C9.5 31 12 27 15.6 24.5 M46.7 18 C47.5 23 45 27.5 41 30.8 M9.5 41.3 H12.9 C14 38.5 15.5 37.5 17.1 37.5 C18.7 37.5 20.5 38.5 21.5 41.3 H24.6 C25.7 38.8 26.8 38 28.2 38" stroke="#6c707e" stroke-width="2.7" stroke-linecap="round" stroke-linejoin="round"/></g><path d="M42.3 27 L31.5 38.3 M31.3 30.4 V38.6 H39.6" stroke="#6c707e" stroke-width="2.8" stroke-linecap="round" stroke-linejoin="round"/></svg>
<svg class="i" style="left:2476px;top:94px;" width="44" height="44" viewBox="0 0 44 44" fill="none"><circle cx="19.7" cy="19.9" r="12.2" stroke="#ced0d6" stroke-width="2.7"/><path d="M28.6 28.8 L37.6 37.8" stroke="#ced0d6" stroke-width="2.8" stroke-linecap="round"/></svg>
<svg class="i" style="left:2555.8px;top:93.8px;" width="44" height="44" viewBox="0 0 44 44" fill="none"><path d="M22.00 5.60 L27.90 11.78 L36.20 13.80 L33.80 22.00 L36.20 30.20 L27.90 32.22 L22.00 38.40 L16.10 32.22 L7.80 30.20 L10.20 22.00 L7.80 13.80 L16.10 11.78 Z" stroke="#ced0d6" stroke-width="2.7" stroke-linejoin="round"/><circle cx="22" cy="22" r="5.4" stroke="#ced0d6" stroke-width="2.7"/></svg>
<div class="r" style="left:2638px;top:96px;width:40px;height:40px;border-radius:50%;overflow:hidden;filter:blur(0.6px)"><div class="r" style="left:0px;top:0px;width:40px;height:40px;background:linear-gradient(90deg,#dca582 0%,#d89c76 40%,#c98a5c 75%,#c2845a 100%)"></div><div class="r" style="left:0px;top:29px;width:14px;height:11px;background:#c07a60"></div><div class="r" style="left:28px;top:29px;width:12px;height:11px;background:#b9735a"></div><div class="r" style="left:6px;top:14px;width:5px;height:18px;background:#9a6e4e"></div><div class="r" style="left:10px;top:0px;width:6px;height:40px;background:linear-gradient(90deg,#4a3020,#1e120c)"></div><div class="r" style="left:14px;top:0px;width:16px;height:3px;background:#3a2a20"></div><div class="r" style="left:16px;top:2px;width:14px;height:26px;background:linear-gradient(180deg,#cfae98 0%,#c9a48c 35%,#c89c84 60%,#c4988a 100%)"></div><div class="r" style="left:15px;top:10px;width:5px;height:4px;background:#6e5846"></div><div class="r" style="left:23px;top:10px;width:5px;height:4px;background:#6e5846"></div><div class="r" style="left:18px;top:22px;width:8px;height:4px;background:#b98580"></div><div class="r" style="left:16px;top:28px;width:12px;height:12px;background:#b88274"></div><div class="r" style="left:28px;top:2px;width:4px;height:13px;background:#2e2018"></div><div class="r" style="left:26px;top:14px;width:4px;height:14px;background:#7a5a42"></div></div>
<div class="r" style="left:122px;top:168px;width:60px;height:60px;background:#dfe1e5;border-radius:12px"></div>
<svg class="i" style="left:132px;top:178px;" width="40" height="40" viewBox="0 0 40 40" fill="none"><path d="M3 8 a2.5 2.5 0 0 1 2.5-2.5 H13 L17 9.5 H34 a2.5 2.5 0 0 1 2.5 2.5 V32 a2.5 2.5 0 0 1 -2.5 2.5 H5.5 A2.5 2.5 0 0 1 3 32 Z" stroke="#6c707e" stroke-width="2.6" stroke-linejoin="round"/></svg>
<svg class="i" style="left:132px;top:257px;" width="40" height="40" viewBox="0 0 40 40" fill="none"><circle cx="18" cy="11.7" r="6.9" stroke="#6c707e" stroke-width="2.7"/><rect x="5.35" y="24.45" width="11.3" height="10.8" rx="2" stroke="#6c707e" stroke-width="2.7"/><path d="M28.9 20.6 L35.3 31.2 H22.5 Z" stroke="#6c707e" stroke-width="2.7" stroke-linejoin="round"/></svg>
<div class="r" style="left:128px;top:328px;width:48px;height:2px;background:#c9ccd6;"></div>
<div class="r" style="left:122px;top:350px;width:60px;height:59px;background:#dfe1e5;border-radius:12px"></div>
<svg class="i" style="left:132px;top:360px;" width="40" height="40" viewBox="0 0 40 40" fill="none"><rect x="5.35" y="5.55" width="11.3" height="11.3" rx="3" stroke="#6c707e" stroke-width="2.7"/><rect x="5.35" y="22.75" width="11.3" height="11.3" rx="3" stroke="#6c707e" stroke-width="2.7"/><rect x="23.05" y="22.75" width="11.3" height="11.3" rx="3" stroke="#6c707e" stroke-width="2.7"/></svg>
<div class="r" style="left:136px;top:456px;width:6px;height:6px;border-radius:50%;background:#6c707e"></div>
<div class="r" style="left:149px;top:456px;width:6px;height:6px;border-radius:50%;background:#6c707e"></div>
<div class="r" style="left:162px;top:456px;width:6px;height:6px;border-radius:50%;background:#6c707e"></div>
<svg class="i" style="left:132px;top:987px;" width="40" height="40" viewBox="0 0 40 40" fill="none"><path d="M9.5 22 V10 Q9.5 6 13 6 Q16.5 6 20 8 Q23.5 6 27 6 Q30.5 6 30.5 10 V22 M2.7 22.8 Q20 20.8 37.3 22.8" stroke="#6c707e" stroke-width="2.7" stroke-linecap="round" stroke-linejoin="round"/><circle cx="12" cy="33" r="4" stroke="#6c707e" stroke-width="2.7"/><circle cx="28" cy="33" r="4" stroke="#6c707e" stroke-width="2.7"/><path d="M2.7 32.5 H8 M16 33 H24 M32 33 H37.3" stroke="#6c707e" stroke-width="2.7" stroke-linecap="round"/></svg>
<svg class="i" style="left:132px;top:1070px;" width="40" height="40" viewBox="0 0 40 40" fill="none"><path d="M11.5 5.8 H28.5 L37.3 20 L28.5 34.2 H11.5 L2.7 20 Z" stroke="#6c707e" stroke-width="2.7" stroke-linejoin="round"/><path d="M16.5 12.8 L28 20 L16.5 27.2 Z" stroke="#6c707e" stroke-width="2.7" stroke-linejoin="round"/></svg>
<svg class="i" style="left:132px;top:1150px;" width="40" height="40" viewBox="0 0 40 40" fill="none"><path d="M4 3.8 H11.5 Q13 4.8 15 4.8 H25 C31 4.8 35 7.5 36 12.3 C33 10.3 30 9.3 27.3 9.8 Q25.5 10.6 23.5 10.6 H16.5 Q14.5 10.6 12.5 11.6 H4 Z" stroke="#6c707e" stroke-width="2.7" stroke-linejoin="round"/><path d="M16.3 11 V18 Q14.7 20 14.7 22.5 V36.3 H23.3 V22.5 Q23.3 20 21.7 18 V11" stroke="#6c707e" stroke-width="2.7" stroke-linejoin="round"/></svg>
<svg class="i" style="left:132px;top:1230px;" width="40" height="40" viewBox="0 0 40 40" fill="none"><path d="M4.6 31.5 A17.4 17.4 0 1 1 35.4 31.5 Z" stroke="#6c707e" stroke-width="2.7" stroke-linejoin="round"/><circle cx="19.2" cy="23.7" r="2.9" stroke="#6c707e" stroke-width="2.7"/><path d="M21.5 21.6 L28.8 15.8" stroke="#6c707e" stroke-width="2.7" stroke-linecap="round"/></svg>
<svg class="i" style="left:132px;top:1309px;" width="40" height="40" viewBox="0 0 40 40" fill="none"><path d="M9.5 5.4 H30.5 L37.5 15.3 L20 36 L2.5 15.3 Z M2.5 15.3 H37.5 M14.8 5.4 L11.5 15.3 L20 36 L28.5 15.3 L25.2 5.4" stroke="#6c707e" stroke-width="2.7" stroke-linejoin="round"/></svg>
<svg class="i" style="left:132px;top:1389px;" width="40" height="40" viewBox="0 0 40 40" fill="none"><path d="M14.5 31 V10.5 Q14.5 8 16.8 9.8 L22 14.8 H29 L34.2 9.8 Q36.5 8 36.5 10.5 V31 a4.3 4.3 0 0 1 -4.3 4.3 H18.8 a4.3 4.3 0 0 1 -4.3-4.3 Z" stroke="#6c707e" stroke-width="2.7" stroke-linejoin="round"/><path d="M2.7 16.2 H13.5 M4.5 23 H13.5 M4.5 29.8 H13.5" stroke="#6c707e" stroke-width="2.7" stroke-linecap="round"/><circle cx="20.4" cy="23" r="1.9" fill="#6c707e"/><circle cx="30.6" cy="23" r="1.9" fill="#6c707e"/><path d="M23.5 27.3 H27.5 L25.5 29.5 Z" fill="#6c707e" stroke="#6c707e" stroke-width="1" stroke-linejoin="round"/></svg>
<svg class="i" style="left:132px;top:1470px;" width="40" height="40" viewBox="0 0 40 40" fill="none"><rect x="3.3" y="5.7" width="33" height="28.5" rx="3.5" stroke="#6c707e" stroke-width="2.7"/><path d="M10.7 11.3 L17.8 17 L10.7 22.8 M19.5 24.8 H28.8" stroke="#6c707e" stroke-width="2.7" stroke-linecap="round" stroke-linejoin="round"/></svg>
<svg class="i" style="left:132px;top:1549px;" width="40" height="40" viewBox="0 0 40 40" fill="none"><circle cx="10.5" cy="9" r="5" stroke="#6c707e" stroke-width="2.7"/><circle cx="28" cy="14" r="5" stroke="#6c707e" stroke-width="2.7"/><path d="M10.5 14 V37.3 M28 19 V21.5 Q28 27.6 22 27.6 H10.5" stroke="#6c707e" stroke-width="2.7" stroke-linecap="round"/></svg>
<svg class="i" style="left:2638px;top:176px;" width="40" height="40" viewBox="0 0 40 40" fill="none"><path d="M23.4 5.7 C14.5 5.7 9.5 10.5 9.5 17 V22 L5.3 30.4 Q4.3 32.6 6.7 32.6 H33.3 Q35.7 32.6 34.7 30.4 L30.5 22 V18.6" stroke="#6c707e" stroke-width="2.7" stroke-linejoin="round"/><path d="M16.2 36 H23.9 A3.85 3.85 0 0 1 16.2 36 Z" fill="#6c707e"/><circle cx="32.9" cy="9" r="7" fill="#d85c66"/></svg>
<svg class="i" style="left:2630px;top:250px;" width="56" height="56" viewBox="0 0 56 56" fill="none"><path d="M15.6 22 C20 19 27 17 33 19.5 C37 21 40 23.5 43 23 C46.5 22.5 47 17.5 44.5 15.5 C42.5 14 40 14.5 38.2 16 M15.6 22 L17.9 29.6 C18.5 31.5 20.5 32 22.5 31 L26.9 27.3 M32.8 26.6 L33.6 27.3 M9.5 41.3 V37 C9.5 31 12 27 15.6 24.5 M46.7 18 C47.5 23 45 27.5 41 31 C38 33.5 36.2 36 36.2 41.3 M9.5 41.3 H12.9 C14 38.5 15.5 37.5 17.1 37.5 C18.7 37.5 20.5 38.5 21.5 41.3 H24.6 C25.7 38.5 27 37.5 28.6 37.5 C30.2 37.5 31.8 38.5 32.7 41.3 H36.2" stroke="#6c707e" stroke-width="2.7" stroke-linecap="round" stroke-linejoin="round"/></svg>
<svg class="i" style="left:2638px;top:339px;" width="40" height="40" viewBox="0 0 40 40" fill="none"><path d="M12 33.8 H9.1 a3.5 3.5 0 0 1 -3.5-3.5 V7.3 a3.5 3.5 0 0 1 3.5-3.5 H21.3 a3.5 3.5 0 0 1 3.5 3.5 V20.5" stroke="#6c707e" stroke-width="2.7"/><path d="M13 10.5 H17" stroke="#6c707e" stroke-width="2.7" stroke-linecap="round"/><path d="M14.7 35.2 A11.35 10 0 0 1 37.4 35.2 Z" stroke="#6c707e" stroke-width="2.7" stroke-linejoin="round"/><path d="M18.6 21.8 L20.2 24.8 M33.2 21.8 L31.8 24.8" stroke="#6c707e" stroke-width="2.7" stroke-linecap="round"/></svg>
<svg class="i" style="left:2638px;top:417px;" width="40" height="40" viewBox="0 0 40 40" fill="none"><path d="M10.6 35.3 H9.1 a3.5 3.5 0 0 1 -3.5-3.5 V9.6 a3.5 3.5 0 0 1 3.5-3.5 H21.3 a3.5 3.5 0 0 1 3.5 3.5 V17.5" stroke="#6c707e" stroke-width="2.7"/><path d="M13 12.5 H17" stroke="#6c707e" stroke-width="2.7" stroke-linecap="round"/><rect x="15.65" y="22.55" width="18.6" height="8.6" rx="2" stroke="#6c707e" stroke-width="2.7"/><path d="M16 37.1 H34" stroke="#6c707e" stroke-width="2.7" stroke-linecap="round"/><circle cx="32.9" cy="8" r="8.6" fill="#f7f8fa"/><circle cx="32.9" cy="8" r="6.8" fill="#5fa46b"/></svg>
<svg class="i" style="left:2638px;top:498px;" width="40" height="40" viewBox="0 0 40 40" fill="none"><path d="M20 3 C21 13 25 18 36 20 C25 22 21 27 20 37 C19 27 15 22 4 20 C15 18 19 13 20 3 Z" fill="#6c707e"/></svg>
<svg class="i" style="left:2638px;top:580px;" width="40" height="40" viewBox="0 0 40 40" fill="none"><path d="M15.5 32.5 H8.9 a3.5 3.5 0 0 1 -3.5-3.5 V6.7 a3.5 3.5 0 0 1 3.5-3.5 H21.1 a3.5 3.5 0 0 1 3.5 3.5 V15.3" stroke="#6c707e" stroke-width="2.6"/><path d="M22.8 23.9 A6.6 6.6 0 1 0 31.6 32.7 M25.9 20.4 A6.8 6.8 0 1 1 35.3 29.6 M25.3 30.3 L32.2 23.3" stroke="#6c707e" stroke-width="2.6" stroke-linecap="round"/></svg>
<div class="r" style="left:2634px;top:648px;width:48px;height:2px;background:#c9ccd6;"></div>
<svg class="i" style="left:2638px;top:681px;" width="40" height="40" viewBox="0 0 40 40" fill="none"><path d="M19.7 33.45 H8.95 a3.5 3.5 0 0 1 -3.5-3.5 V7.85 a3.5 3.5 0 0 1 3.5-3.5 H21.05 a3.5 3.5 0 0 1 3.5 3.5 V16.9" stroke="#6c707e" stroke-width="2.7"/><path d="M13.4 10.5 H16.5" stroke="#6c707e" stroke-width="2.7" stroke-linecap="round"/><circle cx="28" cy="27" r="6.6" stroke="#6c707e" stroke-width="2.7"/><path d="M33.3 32.5 L38 37.2" stroke="#6c707e" stroke-width="2.7" stroke-linecap="round"/></svg>
<svg class="i" style="left:2638px;top:1550px;" width="40" height="40" viewBox="0 0 40 40" fill="none"><circle cx="20" cy="20" r="16" stroke="#6c707e" stroke-width="2.6"/><path d="M20 12.2 V20.2" stroke="#6c707e" stroke-width="4" stroke-linecap="round"/><circle cx="20" cy="28" r="2.3" fill="#6c707e"/></svg>
<svg class="i" style="left:139px;top:1631px;" width="18" height="18" viewBox="0 0 18 18" fill="none"><rect x="1.5" y="1.5" width="15" height="15" rx="3.5" fill="#e7effd" stroke="#3574f0" stroke-width="2"/></svg>
<div class="t" style="left:165px;top:1622.9px;font-size:27.5px;color:#6c707e;font-weight:normal;">JetNews</div>
<svg class="i" style="left:292px;top:1628.5px;" width="12" height="20" viewBox="0 0 12 20" fill="none"><path d="M2 2 L9 9.5 L2 17" stroke="#818594" stroke-width="2" stroke-linecap="round" stroke-linejoin="round"/></svg>
<svg class="i" style="left:321px;top:1631px;" width="18" height="18" viewBox="0 0 18 18" fill="none"><rect x="1.5" y="1.5" width="15" height="15" rx="3.5" fill="#e7effd" stroke="#3574f0" stroke-width="2"/></svg>
<div class="t" style="left:346px;top:1622.9px;font-size:27.5px;color:#6c707e;font-weight:normal;">app</div>
<svg class="i" style="left:412px;top:1628.5px;" width="12" height="20" viewBox="0 0 12 20" fill="none"><path d="M2 2 L9 9.5 L2 17" stroke="#818594" stroke-width="2" stroke-linecap="round" stroke-linejoin="round"/></svg>
<div class="t" style="left:442px;top:1622.9px;font-size:27.5px;color:#6c707e;font-weight:normal;">src</div>
<svg class="i" style="left:497px;top:1628.5px;" width="12" height="20" viewBox="0 0 12 20" fill="none"><path d="M2 2 L9 9.5 L2 17" stroke="#818594" stroke-width="2" stroke-linecap="round" stroke-linejoin="round"/></svg>
<svg class="i" style="left:527px;top:1631px;" width="18" height="18" viewBox="0 0 18 18" fill="none"><rect x="1.5" y="1.5" width="15" height="15" rx="3.5" fill="#e7effd" stroke="#3574f0" stroke-width="2"/></svg>
<div class="t" style="left:552px;top:1622.9px;font-size:27.5px;color:#6c707e;font-weight:normal;">main</div>
<svg class="i" style="left:630px;top:1628.5px;" width="12" height="20" viewBox="0 0 12 20" fill="none"><path d="M2 2 L9 9.5 L2 17" stroke="#818594" stroke-width="2" stroke-linecap="round" stroke-linejoin="round"/></svg>
<div class="t" style="left:659px;top:1622.9px;font-size:27.5px;color:#6c707e;font-weight:normal;">java</div>
<svg class="i" style="left:728px;top:1628.5px;" width="12" height="20" viewBox="0 0 12 20" fill="none"><path d="M2 2 L9 9.5 L2 17" stroke="#818594" stroke-width="2" stroke-linecap="round" stroke-linejoin="round"/></svg>
<div class="t" style="left:758px;top:1622.9px;font-size:27.5px;color:#6c707e;font-weight:normal;">com</div>
<svg class="i" style="left:829px;top:1628.5px;" width="12" height="20" viewBox="0 0 12 20" fill="none"><path d="M2 2 L9 9.5 L2 17" stroke="#818594" stroke-width="2" stroke-linecap="round" stroke-linejoin="round"/></svg>
<div class="t" style="left:860px;top:1622.9px;font-size:27.5px;color:#6c707e;font-weight:normal;">example</div>
<svg class="i" style="left:981px;top:1628.5px;" width="12" height="20" viewBox="0 0 12 20" fill="none"><path d="M2 2 L9 9.5 L2 17" stroke="#818594" stroke-width="2" stroke-linecap="round" stroke-linejoin="round"/></svg>
<div class="t" style="left:1012px;top:1622.9px;font-size:27.5px;color:#6c707e;font-weight:normal;">jetnews</div>
<svg class="i" style="left:1126px;top:1628.5px;" width="12" height="20" viewBox="0 0 12 20" fill="none"><path d="M2 2 L9 9.5 L2 17" stroke="#818594" stroke-width="2" stroke-linecap="round" stroke-linejoin="round"/></svg>
<div class="t" style="left:1156px;top:1622.9px;font-size:27.5px;color:#6c707e;font-weight:normal;">ui</div>
<svg class="i" style="left:1197px;top:1628.5px;" width="12" height="20" viewBox="0 0 12 20" fill="none"><path d="M2 2 L9 9.5 L2 17" stroke="#818594" stroke-width="2" stroke-linecap="round" stroke-linejoin="round"/></svg>
<div class="t" style="left:1226px;top:1622.9px;font-size:27.5px;color:#6c707e;font-weight:normal;">article</div>
<svg class="i" style="left:1319px;top:1628.5px;" width="12" height="20" viewBox="0 0 12 20" fill="none"><path d="M2 2 L9 9.5 L2 17" stroke="#818594" stroke-width="2" stroke-linecap="round" stroke-linejoin="round"/></svg>
<svg class="i" style="left:1354px;top:1627px;" width="24" height="24" viewBox="0 0 24 24" fill="none"><path d="M1.5 1.5 H22.5 L12 12 L22.5 22.5 H1.5 Z" fill="#f8f5ff" stroke="#7346e8" stroke-width="2" stroke-linejoin="round"/></svg>
<div class="t" style="left:1390px;top:1622.9px;font-size:27.5px;color:#6c707e;font-weight:normal;">ArticleScreen.kt</div>
<div class="t" style="left:2184px;top:1622.9px;font-size:27.5px;color:#6c707e;font-weight:normal;">1:1</div>
<div class="t" style="left:2248px;top:1622.9px;font-size:27.5px;color:#6c707e;font-weight:normal;">LF</div>
<div class="t" style="left:2310.6px;top:1622.9px;font-size:27.5px;color:#6c707e;font-weight:normal;">UTF-8</div>
<svg class="i" style="left:2423px;top:1625px;" width="30" height="30" viewBox="0 0 30 30" fill="none"><path d="M6 3 H24.1 a2.7 2.7 0 0 1 2.7 2.7 V25 a0.8 0.8 0 0 1 -1.3 0.6 L20 21.3 H6 a2.7 2.7 0 0 1 -2.7-2.7 V5.7 A2.7 2.7 0 0 1 6 3 Z" stroke="#6c707e" stroke-width="2.2" stroke-linejoin="round"/><path d="M14.8 7.3 V13.8" stroke="#6c707e" stroke-width="2.2"/><path d="M14.8 16.2 V18.2" stroke="#6c707e" stroke-width="2.2"/></svg>
<div class="t" style="left:2486px;top:1622.9px;font-size:27.5px;color:#6c707e;font-weight:normal;">4 spaces</div>
<svg class="i" style="left:2634px;top:1625px;" width="30" height="30" viewBox="0 0 30 30" fill="none"><rect x="3.3" y="12.6" width="17" height="12.6" rx="3" stroke="#6c707e" stroke-width="2.2"/><path d="M17.5 12.6 V9.3 A4 4 0 0 1 25.5 9.3 V11.8" stroke="#6c707e" stroke-width="2.2" stroke-linecap="round"/><path d="M11.8 16.2 V21" stroke="#6c707e" stroke-width="2.2"/></svg>
</div></body></html>
